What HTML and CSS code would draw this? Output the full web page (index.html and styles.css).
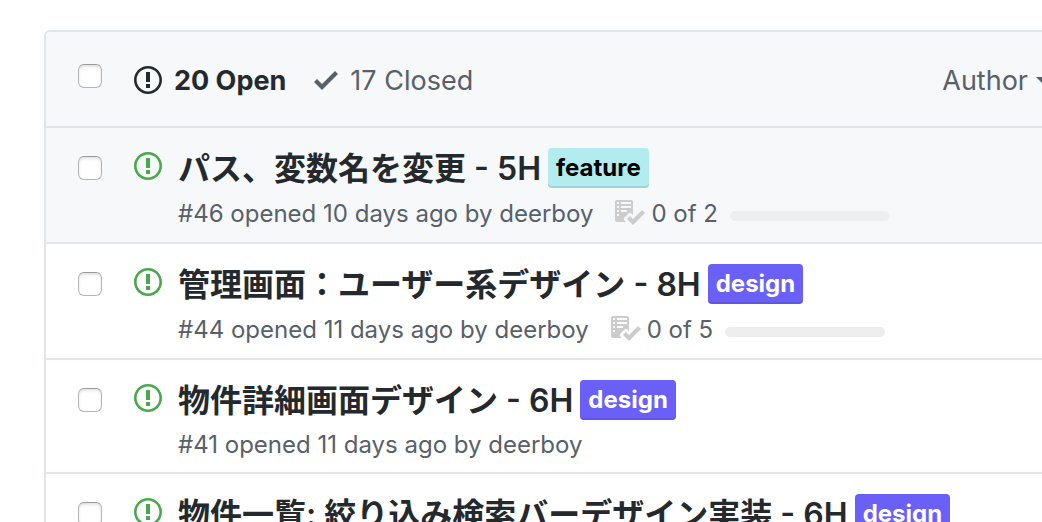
FILE: index.html
```html
<!DOCTYPE html>
<html lang="ja">
<head>
<meta charset="utf-8">
<title>Issues</title>
<link rel="stylesheet" href="styles.css">
</head>
<body>
<svg class="sprite" aria-hidden="true">
  <symbol id="issue" viewBox="0 0 14 16"><path d="M7 2.300c3.140 0 5.700 2.560 5.700 5.700s-2.560 5.700-5.700 5.700A5.710 5.710 0 0 1 1.300 8c0-3.140 2.560-5.700 5.700-5.700zM7 1C3.140 1 0 4.140 0 8s3.140 7 7 7 7-3.140 7-7-3.140-7-7-7zm1 3H6v5h2V4zm0 6H6v2h2v-2z" fill-rule="evenodd"/></symbol>
  <symbol id="check" viewBox="0 0 12 16"><path d="M12 5l-8 8-4-4 1.500-1.500L4 10l6.500-6.500L12 5z"/></symbol>
  <symbol id="tasks" viewBox="0 0 16 16"><path fill-rule="evenodd" d="M16 8.500l-6 6-3-3L8.500 10l1.500 1.500L14.500 7 16 8.500zM5.700 12.200l.8.8H2c-.55 0-1-.45-1-1V3c0-.55.45-1 1-1h7c.55 0 1 .45 1 1v6.500l-.8-.8c-.39-.39-1.030-.39-1.420 0L5.700 10.800a.996.996 0 0 0 0 1.410v-.01zM4 4h5V3H4v1zm0 2h5V5H4v1zm0 2h3V7H4v1zM3 9H2v1h1V9zm0-2H2v1h1V7zm0-2H2v1h1V5zm0-2H2v1h1V3z"/></symbol>
</svg>
<main class="issues">
  <header class="toolbar">
    <input class="check" type="checkbox" aria-label="Select all issues">
    <nav class="states">
      <a class="state selected" href="#open"><svg class="icon"><use href="#issue"/></svg>20 Open</a>
      <a class="state" href="#closed"><svg class="icon tick"><use href="#check"/></svg>17 Closed</a>
    </nav>
    <button class="filter" type="button">Author<span class="caret"></span></button>
  </header>
  <article class="row hovered">
    <input class="check" type="checkbox" aria-label="Select issue 46">
    <svg class="icon open"><use href="#issue"/></svg>
    <div class="body">
      <div class="heading"><a class="title" href="#46">パス、変数名を変更 - 5H</a><a class="label feature" href="#feature">feature</a></div>
      <div class="meta"><span>#46 opened 10 days ago by <a href="#deerboy">deerboy</a></span><span class="tasks"><svg class="list"><use href="#tasks"/></svg>0 of 2<span class="progress"></span></span></div>
    </div>
  </article>
  <article class="row">
    <input class="check" type="checkbox" aria-label="Select issue 44">
    <svg class="icon open"><use href="#issue"/></svg>
    <div class="body">
      <div class="heading"><a class="title" href="#44">管理画面：ユーザー系デザイン - 8H</a><a class="label design" href="#design">design</a></div>
      <div class="meta"><span>#44 opened 11 days ago by <a href="#deerboy">deerboy</a></span><span class="tasks"><svg class="list"><use href="#tasks"/></svg>0 of 5<span class="progress"></span></span></div>
    </div>
  </article>
  <article class="row">
    <input class="check" type="checkbox" aria-label="Select issue 41">
    <svg class="icon open"><use href="#issue"/></svg>
    <div class="body">
      <div class="heading"><a class="title" href="#41">物件詳細画面デザイン - 6H</a><a class="label design" href="#design">design</a></div>
      <div class="meta"><span>#41 opened 11 days ago by <a href="#deerboy">deerboy</a></span></div>
    </div>
  </article>
  <article class="row">
    <input class="check" type="checkbox" aria-label="Select issue">
    <svg class="icon open"><use href="#issue"/></svg>
    <div class="body">
      <div class="heading"><a class="title" href="#list">物件一覧: 絞り込み検索バーデザイン実装 - 6H</a><a class="label design" href="#design">design</a></div>
    </div>
  </article>
</main>
</body>
</html>
```
FILE: styles.css
```css
* { box-sizing: border-box; }
html, body { height: 100%; }
body {
  margin: 0;
  padding: 30px 0 0 44px;
  overflow: hidden;
  background: #fff;
  color: #586069;
  font-family: Inter, "Noto Sans CJK JP", sans-serif;
}
a { color: inherit; text-decoration: none; }
.sprite { position: absolute; width: 0; height: 0; }
.issues {
  border: 2px solid #e1e4e8;
  border-right: 0;
  border-radius: 6px 0 0 0;
  overflow: hidden;
}
.check {
  appearance: none;
  flex: none;
  width: 24px;
  height: 24px;
  margin: 0 32px 0 0;
  border: 1px solid #b4b4b4;
  border-top-color: #9a9a9a;
  border-radius: 6px;
  background: #fff;
  box-shadow: inset 0 2px 3px #e4e4e4;
}
.icon { flex: none; width: 28px; height: 32px; fill: currentColor; }
.tick { width: 24px; }
.toolbar {
  display: flex;
  align-items: flex-start;
  padding: 32px 0 28px 32px;
  background: #f6f8fa;
  font-size: 27px;
  line-height: 34px;
}
.states { display: flex; gap: 28px; }
.state { display: flex; gap: 12px; }
.selected { color: #24292e; font-weight: 700; }
.filter {
  display: flex;
  align-items: center;
  gap: 8px;
  margin: 0 -10px 0 auto;
  padding: 0;
  border: 0;
  background: none;
  color: inherit;
  font: inherit;
}
.caret { border: 8px solid transparent; border-top-color: #586069; border-bottom: 0; }
.row {
  display: flex;
  align-items: flex-start;
  padding: 20px 0 12px 32px;
  border-top: 2px solid #e1e4e8;
}
.row .check { margin-top: 8px; }
.hovered { background: #f6f8fa; }
.open { color: #49a84c; margin: 2px 16px 0 0; }
.body { flex: 1; min-width: 0; }
.heading { display: flex; gap: 7px; white-space: nowrap; }
.title { color: #24292e; font-size: 32px; line-height: 42px; height: 40px; font-weight: 600; }
.label {
  height: 40px;
  padding: 0 8px;
  border-radius: 4px;
  box-shadow: inset 0 -2px 0 rgba(27, 31, 35, .12);
  font-size: 24px;
  line-height: 40px;
  font-weight: 700;
}
.feature { background: #b2ecee; color: #000; }
.design { background: #6a5ff7; color: #fff; }
.meta {
  display: flex;
  align-items: center;
  gap: 20px;
  margin-top: 10px;
  font-size: 24px;
  line-height: 30px;
  white-space: nowrap;
}
.tasks { display: flex; align-items: center; height: 32px; }
.list { width: 32px; height: 32px; margin: -4px 6px 0 0; fill: #ccc; }
.progress { width: 160px; height: 10px; margin: 4px 0 0 12px; border-radius: 6px; background: #eee; }
```
